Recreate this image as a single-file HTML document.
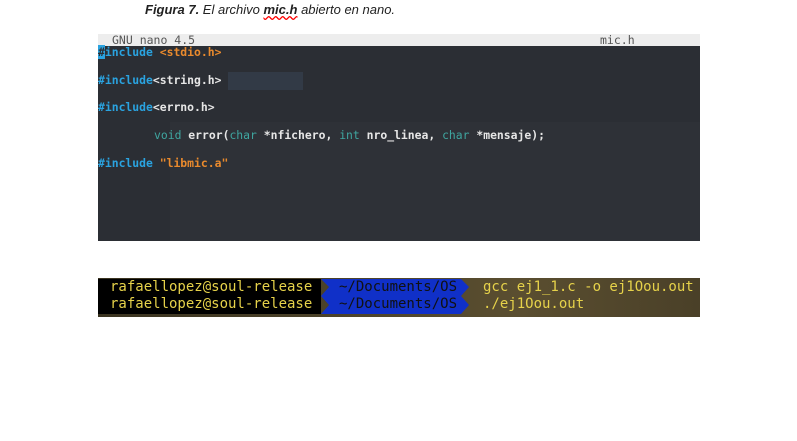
<!DOCTYPE html>
<html><head><style>
body{margin:0;width:797px;height:441px;background:#fff;position:relative;overflow:hidden;font-family:"DejaVu Sans Mono","Liberation Mono",monospace}
.cap{position:absolute;left:145px;top:2px;font:italic 13px "Liberation Sans",sans-serif;color:#222}
.cap b{font-weight:bold}
.ed{position:absolute;left:98px;top:34px;width:602px;height:207px;background:#2b2e34}
.tb{position:absolute;left:0;top:0;width:602px;height:12px;background:#ededed;color:#555;font-size:11.5px;line-height:12px}
.l{position:absolute;font-size:11.4px;font-weight:bold;white-space:pre;color:#e6e6e6}
.k{color:#2aa3e0}.o{color:#e98a2d}.t{color:#3fa6a0;font-weight:normal}
.term{position:absolute;left:98px;top:278px;width:602px;height:39px;background:linear-gradient(90deg,#3a3320,#5a4e30 70%,#4a4028);font-size:14px;color:#e6d24a;white-space:pre}
.row{position:absolute;left:0;height:17px;line-height:17px}
</style></head><body>
<div class="cap"><b>Figura 7.</b> El archivo <b style="text-decoration:underline wavy red">mic.h</b> abierto en nano.</div>
<div class="ed">
<div class="tb"><span style="position:absolute;left:14px">GNU nano 4.5</span><span style="position:absolute;left:502px">mic.h</span></div>
<div style="position:absolute;left:130px;top:38px;width:75px;height:18px;background:#323a46"></div>
<div style="position:absolute;left:72px;top:88px;width:530px;height:119px;background:#2e3137"></div>
<div class="l" style="left:0;top:11px"><span style="background:#2aa3e0;color:#2b2e34">#</span><span class="k">include</span> <span class="o">&lt;stdio.h&gt;</span></div>
<div class="l" style="left:0;top:39px"><span class="k">#include</span>&lt;string.h&gt;</div>
<div class="l" style="left:0;top:66px"><span class="k">#include</span>&lt;errno.h&gt;</div>
<div class="l" style="left:56px;top:94px"><span class="t">void</span> error(<span class="t">char</span> *nfichero, <span class="t">int</span> nro_linea, <span class="t">char</span> *mensaje);</div>
<div class="l" style="left:0;top:122px"><span class="k">#include</span> <span class="o">"libmic.a"</span></div>
</div>
<div class="term">
<div style="position:absolute;left:0;top:1px;width:223px;height:35px;background:#000"></div>
<svg style="position:absolute;left:223px;top:1px" width="150" height="35"><polygon points="0,0 140,0 148,8 140,17 148,26 140,35 0,35 8,26 0,17 8,8" fill="#1030c8"/></svg>
<div class="row" style="top:1px;left:12px">rafaellopez@soul-release</div>
<div class="row" style="top:18px;left:12px">rafaellopez@soul-release</div>
<div class="row" style="top:1px;left:241px;color:#111">~/Documents/OS</div>
<div class="row" style="top:18px;left:241px;color:#111">~/Documents/OS</div>
<div class="row" style="top:1px;left:385px">gcc ej1_1.c -o ej1Oou.out</div>
<div class="row" style="top:18px;left:385px">./ej1Oou.out</div>
</div>
</body></html>
